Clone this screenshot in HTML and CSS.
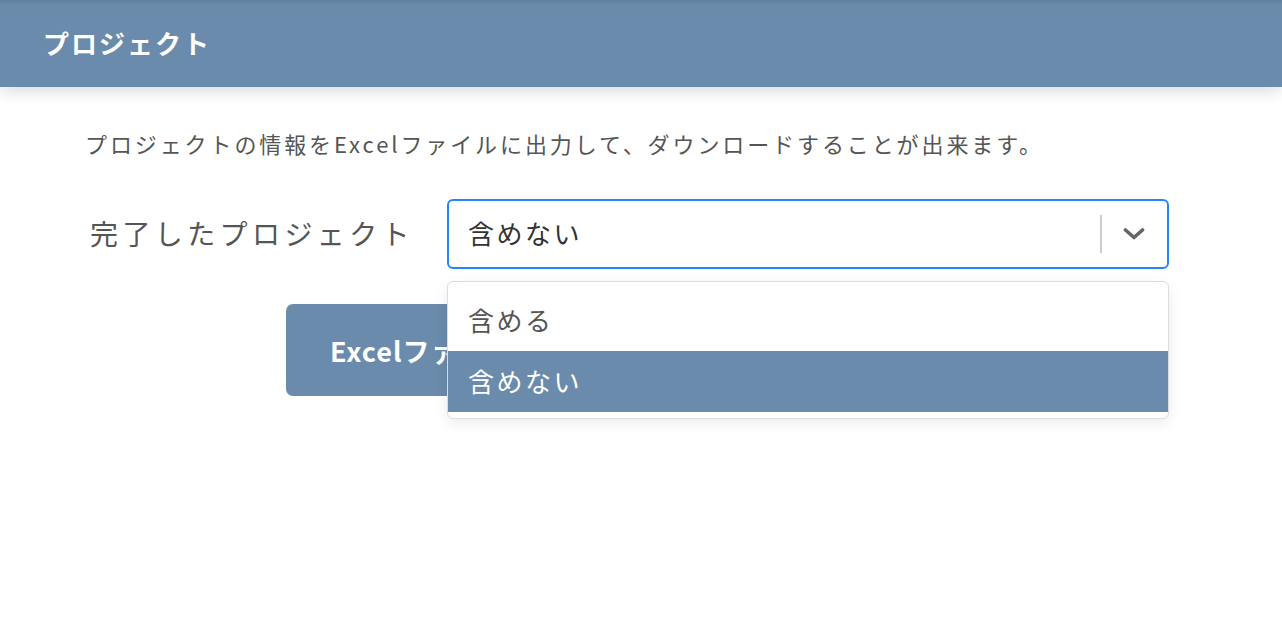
FILE: index.html
```html
<!DOCTYPE html>
<html lang="ja">
<head>
<meta charset="utf-8">
<title>プロジェクト</title>
<link rel="stylesheet" href="styles.css">
</head>
<body>
<header class="topbar">
  <h1 class="topbar-title">プロジェクト</h1>
</header>
<main class="content">
  <p class="desc">プロジェクトの情報をExcelファイルに出力して、ダウンロードすることが出来ます。</p>
  <div class="form-row">
    <label class="form-label">完了したプロジェクト</label>
    <div class="select">
      <div class="select-control">
        <span class="select-value">含めない</span>
        <span class="select-indicators">
          <span class="select-sep"></span>
          <svg class="chevron" width="22" height="12" viewBox="0 0 22 12"><path d="M2.5 2 L11 9.5 L19.5 2" fill="none" stroke="#666" stroke-width="3.6" stroke-linecap="round" stroke-linejoin="round"/></svg>
        </span>
      </div>
      <div class="menu">
        <div class="option">含める</div>
        <div class="option selected">含めない</div>
      </div>
    </div>
  </div>
  <div class="actions">
    <button class="btn">Excelファイルをダウンロード</button>
  </div>
</main>
</body>
</html>
```

FILE: styles.css
```css
* { box-sizing: border-box; }
html, body { margin: 0; padding: 0; background: #fff; }
body {
  font-family: "Noto Sans CJK JP", "Noto Sans", sans-serif;
  color: #555;
  min-height: 642px;
}
.topbar {
  height: 87px;
  background: linear-gradient(#5f7f9e 0, #6a8bab 5px, #6a8bab 100%);
  box-shadow: 0 5px 14px rgba(0, 0, 0, 0.13);
  display: flex;
  align-items: center;
  padding-left: 43px;
  position: relative;
  z-index: 1;
}
.topbar-title {
  margin: 0;
  color: #fff;
  font-size: 26px;
  font-weight: 700;
  letter-spacing: 2px;
  padding-bottom: 2px;
}
.content {
  padding: 0 0 160px 85px;
  min-height: 555px;
}
.desc {
  margin: 0;
  padding-top: 40px;
  height: 112px;
  font-size: 22px;
  letter-spacing: 2.9px;
  color: #555;
  line-height: 32px;
}
.form-row {
  display: flex;
  align-items: center;
  height: 70px;
}
.form-label {
  width: 362px;
  padding-left: 5px;
  padding-bottom: 3px;
  font-size: 28px;
  letter-spacing: 4.4px;
  color: #555;
}
.select {
  position: relative;
  width: 722px;
}
.select-control {
  height: 70px;
  border: 2px solid #2684ff;
  border-radius: 6px;
  display: flex;
  align-items: center;
  padding-left: 19px;
  background: #fff;
}
.select-value {
  flex: 1;
  font-size: 26px;
  color: #333;
  letter-spacing: 2.5px;
  padding-bottom: 3px;
}
.select-indicators {
  display: flex;
  align-items: center;
  height: 100%;
}
.select-sep {
  width: 2px;
  height: 38px;
  background: #ccc;
  margin-right: 21px;
}
.chevron {
  margin-right: 22px;
  display: block;
}
.menu {
  position: absolute;
  top: 82px;
  left: 0;
  width: 722px;
  background: #fff;
  border: 1px solid #ddd;
  border-radius: 6px;
  box-shadow: 0 4px 14px rgba(0, 0, 0, 0.08);
  padding: 8px 0 6px;
  z-index: 5;
}
.option {
  height: 61px;
  display: flex;
  align-items: center;
  padding-left: 20px;
  padding-bottom: 3px;
  font-size: 26px;
  color: #555;
  letter-spacing: 2.5px;
}
.option.selected {
  background: #6a8bab;
  color: #fff;
}
.actions {
  padding: 35px 0 0 201px;
}
.btn {
  height: 92px;
  background: #6a8bab;
  border: 0;
  border-radius: 7px;
  color: #fff;
  font-family: inherit;
  font-size: 27px;
  font-weight: 700;
  padding: 0 44px;
  letter-spacing: 1px;
}
```
